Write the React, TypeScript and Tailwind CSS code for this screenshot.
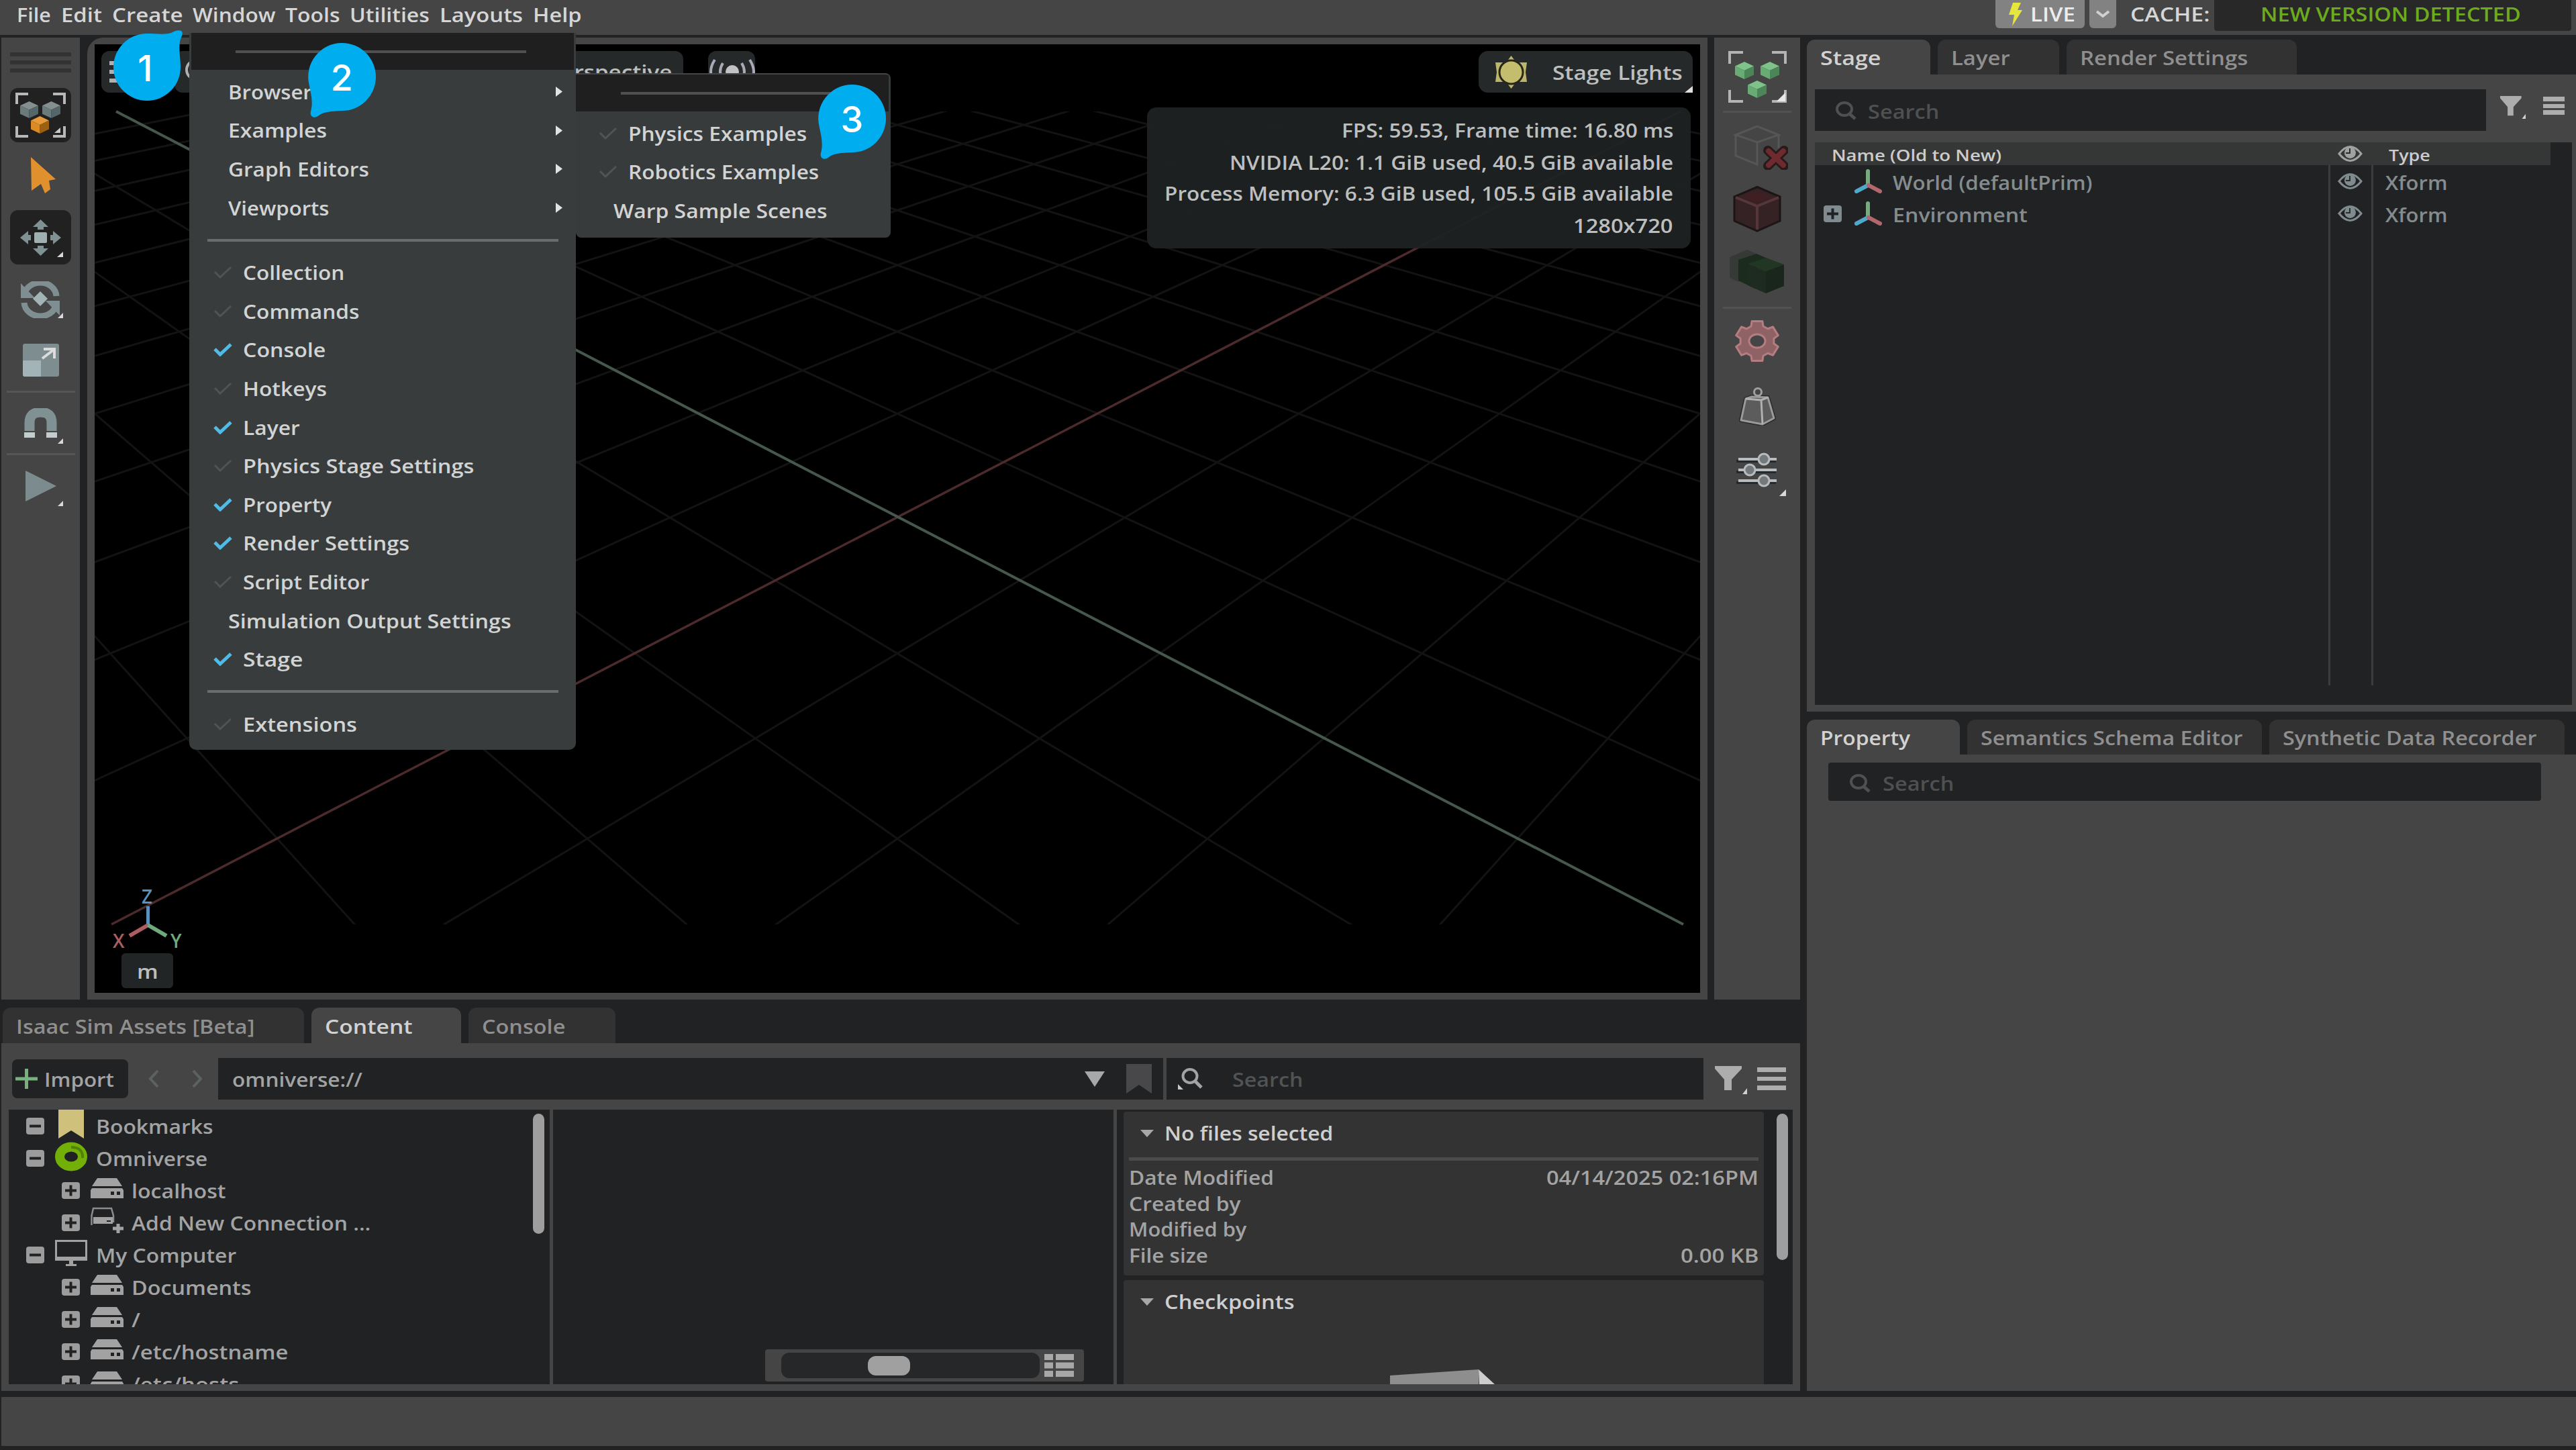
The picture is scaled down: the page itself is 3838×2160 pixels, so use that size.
import { useLayoutEffect, useRef, useState } from "react";
import type { ReactNode } from "react";
import clsx from "clsx";

// Text set to a fixed width, the UI font is drawn a bit wider than Open Sans
function Label({ w, className, children }: { w: number; className?: string; children: ReactNode }) {
  const ref = useRef<HTMLSpanElement>(null);
  const [stretch, setStretch] = useState(1);

  useLayoutEffect(() => {
    if (ref.current) setStretch(w / ref.current.offsetWidth);
  }, [w]);

  return (
    <span className={clsx("inline-block shrink-0 whitespace-nowrap", className)} style={{ width: w }}>
      <span ref={ref} className="inline-block origin-left" style={{ transform: `scaleX(${stretch})` }}>
        {children}
      </span>
    </span>
  );
}

const menus = [
  { name: "File", w: 51 },
  { name: "Edit", w: 61 },
  { name: "Create", w: 105 },
  { name: "Window", w: 123 },
  { name: "Tools", w: 81 },
  { name: "Utilities", w: 119 },
  { name: "Layouts", w: 124 },
  { name: "Help", w: 72 },
];

function MenuBar() {
  return (
    <div className="h-[52px] shrink-0 flex bg-[#454545] pl-[25px] pr-[7px] text-[#d6d6d6]">
      <div className="h-11 flex items-center gap-[15px]">
        {menus.map((m) => (
          <Label key={m.name} w={m.w}>{m.name}</Label>
        ))}
      </div>
      <div className="ml-auto flex items-start">
        <div className="w-[133px] h-[42px] flex items-center bg-[#828282] rounded-b-md pl-5 text-[#ececec]">
          <svg width="20" height="36" viewBox="0 0 20 36">
            <path d="M6 1h12l-5 11h7L5 36l3-17H0z" fill="#e6e63c" />
          </svg>
          <Label w={67} className="ml-3">LIVE</Label>
        </div>
        <div className="w-10 h-[42px] ml-[7px] flex items-center justify-center bg-[#828282] rounded-b-md">
          <svg width="22" height="12" viewBox="0 0 22 12">
            <path d="M2 2l9 7 9-7" fill="none" stroke="#d0d0d0" strokeWidth="4" />
          </svg>
        </div>
        <div className="h-[42px] ml-[21px] flex items-center">
          <Label w={118}>CACHE:</Label>
        </div>
        <div className="w-[532px] h-[46px] ml-[7px] pb-1 flex items-center justify-center bg-[#282828] rounded-b text-[#6cab1c]">
          <Label w={388} className="mr-1.5">NEW VERSION DETECTED</Label>
        </div>
      </div>
    </div>
  );
}

type Tab = { name: string; w: number; text: number; active?: boolean };

function Tabs({ tabs, className }: { tabs: Tab[]; className?: string }) {
  return (
    <div className={clsx("flex gap-[11px]", className)}>
      {tabs.map((t) => (
        <div
          key={t.name}
          className={clsx(
            "h-full flex items-center pl-5 pt-0.5 rounded-t-[12px]",
            t.active ? "bg-[#454545] text-[#d2d2d2]" : "bg-[#323232] text-[#8f8f8f]"
          )}
          style={{ width: t.w }}
        >
          <Label w={t.text}>{t.name}</Label>
        </div>
      ))}
    </div>
  );
}

function Cube({ x, y, w, h, top, left, right }: {
  x: number; y: number; w: number; h: number; top: string; left: string; right: string;
}) {
  const cx = x + w / 2;
  const q = h / 4;
  return (
    <g>
      <path d={`M${cx} ${y}L${x + w} ${y + q}L${cx} ${y + 2 * q}L${x} ${y + q}Z`} fill={top} />
      <path d={`M${x} ${y + q}L${cx} ${y + 2 * q}V${y + h}L${x} ${y + 3 * q}Z`} fill={left} />
      <path d={`M${x + w} ${y + q}L${cx} ${y + 2 * q}V${y + h}L${x + w} ${y + 3 * q}Z`} fill={right} />
    </g>
  );
}

function LeftToolbar() {
  return (
    <div className="w-[117px] shrink-0 flex flex-col items-center bg-[#454545]">
      <div className="mt-[22px] w-[91px] flex flex-col gap-[6px]">
        <div className="h-[6px] bg-[#333]" />
        <div className="h-[6px] bg-[#333]" />
        <div className="h-[6px] bg-[#333]" />
      </div>
      <div className="mt-[23px] w-[91px] h-[81px] rounded-[12px] bg-[#212121] flex items-center justify-center">
        <svg width="75" height="67" viewBox="0 0 75 67">
          <path d="M2 17V2h17M56 2h17v15M2 50v15h17M56 65h17V50" fill="none" stroke="#b8b8bb" strokeWidth="4" />
          <Cube x={7} y={13} w={27} h={25} top="#84908f" left="#6b7b7c" right="#55666a" />
          <Cube x={40} y={13} w={27} h={25} top="#84908f" left="#6b7b7c" right="#55666a" />
          <Cube x={23} y={35} w={27} h={26} top="#e89a38" left="#dc8a24" right="#9c6012" />
          <path d="M67 52v8h-9z" fill="#c8c8c8" />
        </svg>
      </div>
      <svg className="mt-[22px] ml-[7px]" width="38" height="54" viewBox="0 0 38 54">
        <path d="M1 0L38 33 28 35 30 48 22 54 16 40 2 50Z" fill="#e0902c" />
      </svg>
      <div className="mt-[25px] w-[91px] h-[81px] rounded-[12px] bg-[#212121] flex items-center justify-center">
        <svg width="91" height="81" viewBox="0 0 91 81">
          <rect x="36" y="33" width="19" height="16" rx="2" fill="#9fb0b2" />
          <path
            d="M45.500 14L57 25H50V29H41V25H34ZM45.500 68L57 57H50V53H41V57H34ZM15 41L27 31V37H31V45H27V51ZM76 41L64 31V37H60V45H64V51Z"
            fill="#7f9193"
          />
          <path d="M79 62v8h-9z" fill="#d8d8d8" />
        </svg>
      </div>
      <svg className="mt-[25px]" width="69" height="55" viewBox="0 0 69 55">
        <path d="M10 24A24 21 0 0 1 58 22M58 30A24 21 0 0 1 10 32" fill="none" stroke="#7f8f91" strokeWidth="9" />
        <path d="M5 3V25H26ZM63 51V29H42Z" fill="#7f8f91" />
        <path d="M34 15L45 26 34 37 23 26Z" fill="#a3b4b6" />
        <path d="M68 47v8h-8z" fill="#d8d8d8" />
      </svg>
      <svg className="mt-[38px]" width="54" height="49" viewBox="0 0 54 49">
        <rect width="54" height="49" rx="3" fill="#7d8d90" />
        <path d="M0 25H27V49H3Q0 49 0 46Z" fill="#a3b4b8" />
        <path d="M29 22L46 9M31 8H47V22" fill="none" stroke="#dcdcdc" strokeWidth="4" />
      </svg>
      <div className="mt-[21px] w-[102px] h-[3px] bg-[#565656]" />
      <svg className="mt-[23px]" width="69" height="53" viewBox="0 0 69 53">
        <path d="M18 34V22Q18 6 34.500 6T51 22V34" fill="none" stroke="#7f9193" strokeWidth="15" />
        <path d="M10 36H26V44H10ZM43 36H59V44H43Z" fill="#c3cdce" />
        <path d="M68 45v8h-8z" fill="#d8d8d8" />
      </svg>
      <div className="mt-[14px] w-[102px] h-[3px] bg-[#565656]" />
      <svg className="mt-[23px]" width="69" height="53" viewBox="0 0 69 53">
        <path d="M12 0L58 23 12 46Z" fill="#7c8c8e" />
        <path d="M68 45v8h-8z" fill="#d8d8d8" />
      </svg>
    </div>
  );
}

// Six-tooth gear outline around (cx, cy)
function gearPoints(cx: number, cy: number) {
  const pts: string[] = [];
  for (let i = 0; i < 6; i++) {
    const mid = i * 60 - 90;
    [[-21, 24], [-14, 31], [14, 31], [21, 24]].forEach(([da, r]) => {
      const a = ((mid + da) * Math.PI) / 180;
      pts.push(`${cx + r * 1.05 * Math.cos(a)},${cy + r * 0.98 * Math.sin(a)}`);
    });
  }
  return pts.join(" ");
}

function RightToolbar() {
  const green = { top: "#7fc28a", left: "#68ab74", right: "#4c8558" };
  return (
    <div className="w-[128px] shrink-0 flex flex-col items-center bg-[#454545]">
      <svg className="mt-5" width="87" height="77" viewBox="0 0 87 77">
        <path d="M2 19V2h20M65 2h20v17M2 58v17h20M65 75h20V58" fill="none" stroke="#b4b4b4" strokeWidth="4" />
        <Cube x={10} y={16} w={28} h={26} {...green} />
        <Cube x={48} y={16} w={28} h={26} {...green} />
        <Cube x={29} y={44} w={28} h={26} {...green} />
        <path d="M85 62v13H72z" fill="#e8e8e8" />
      </svg>
      <div className="mt-3 w-[102px] h-[3px] bg-[#525252]" />
      <svg className="mt-[19px]" width="92" height="66" viewBox="0 0 92 66">
        <path d="M14 14L46 1 78 14 46 25ZM14 14V45L46 58V25M78 14V34" fill="none" stroke="#565656" strokeWidth="3" />
        <path d="M62 37L86 60M86 37L62 60" stroke="#271a1a" strokeWidth="14" strokeLinecap="round" />
        <path d="M63 38L85 59M85 38L63 59" stroke="#6e2a2e" strokeWidth="8" strokeLinecap="round" />
      </svg>
      <svg className="mt-6" width="72" height="69" viewBox="0 0 72 69">
        <path d="M36 1.500L70 16V52L36 67 2 52V16Z" fill="#352224" stroke="#1c1516" strokeWidth="3" />
        <path d="M4 17L36 30 68 17M36 30V65" fill="none" stroke="#563638" strokeWidth="4" />
        <path d="M14 16L36 8 58 16 36 25Z" fill="#401f23" />
      </svg>
      <svg className="mt-[26px]" width="82" height="66" viewBox="0 0 82 66">
        <path d="M0 11L26 0 40 6 14 16V48L0 42Z" fill="#363a37" />
        <path d="M13 15L40 6 66 17 38 27V58L13 46Z" fill="#1b2c1e" />
        <path d="M27 21L54 12 81 22 54 32Z" fill="#223624" />
        <path d="M27 21L54 32V65L27 53Z" fill="#1d2b20" />
        <path d="M81 22L54 32V65L81 54Z" fill="#1a261c" />
      </svg>
      <div className="mt-[19px] w-[102px] h-[3px] bg-[#525252]" />
      <svg className="mt-4" width="70" height="64" viewBox="0 0 70 64">
        <polygon points={gearPoints(35, 32)} fill="#8f6365" stroke="#b57d80" strokeWidth="3" strokeLinejoin="round" />
        <ellipse cx="35" cy="32" rx="12" ry="10" fill="#454545" stroke="#b57d80" strokeWidth="3" />
      </svg>
      <svg className="mt-9" width="56" height="58" viewBox="0 0 56 58">
        <path d="M11 18L4 50 36 56 53 47 44 16 20 15Z" fill="#5c5c5c" stroke="#292929" strokeWidth="6" strokeLinejoin="round" />
        <path d="M11 18L4 50 36 56 53 47 44 16 20 15Z" fill="#5c5c5c" stroke="#9a9a9a" strokeWidth="3" strokeLinejoin="round" />
        <path d="M11 18L34 20 44 16M34 20L36 56" fill="none" stroke="#b0b0b0" strokeWidth="3" />
        <circle cx="29" cy="8" r="5.500" fill="none" stroke="#a0a0a0" strokeWidth="3" />
      </svg>
      <svg className="mt-[38px]" width="87" height="67" viewBox="0 0 87 67">
        <path d="M12 15H71M12 31H71M12 47H71" stroke="#24292d" strokeWidth="4" />
        <path d="M15 12H72M15 28H72M15 44H72" stroke="#b9bcbe" strokeWidth="4" />
        <g fill="#74797d" stroke="#b9bcbe" strokeWidth="3">
          <circle cx="53" cy="12" r="8" />
          <circle cx="32" cy="28" r="8" />
          <circle cx="53" cy="44" r="8" />
        </g>
        <path d="M86 57v10H76z" fill="#d8d8d8" />
      </svg>
    </div>
  );
}

// Ground grid. (a, b) are floor coordinates along the screen axes, b going away from the camera
function project(a: number, b: number) {
  const s = 1 + 0.06663 * b;
  return { x: 1337 + (169.4 * a) / s, y: 771 - (87.72 * b) / s };
}

function Grid() {
  const near = -5.5;
  const far = 14;
  const lines: ReactNode[] = [];
  for (let m = -20; m <= 20; m++) {
    if (m === 0) continue;
    const p1 = project(2 * m + near, near);
    const p2 = project(2 * m + far, far);
    const q1 = project(2 * m - near, near);
    const q2 = project(2 * m - far, far);
    lines.push(<line key={`p${m}`} x1={p1.x} y1={p1.y} x2={p2.x} y2={p2.y} />);
    lines.push(<line key={`q${m}`} x1={q1.x} y1={q1.y} x2={q2.x} y2={q2.y} />);
  }
  return (
    <svg className="block" width="2392" height="1413" viewBox="141 66 2392 1413">
      <clipPath id="floor">
        <rect x="141" y="166" width="2392" height="1211" />
      </clipPath>
      <g clipPath="url(#floor)" stroke="#131313" strokeWidth="3">{lines}</g>
      <line x1="166" y1="1377" x2="2504" y2="166" stroke="#4d2a2c" strokeWidth="3.500" />
      <line x1="173" y1="166" x2="2508" y2="1377" stroke="#46584c" strokeWidth="4" />
      <g strokeWidth="6">
        <path d="M220.500 1378V1350" stroke="#5a8fbe" strokeWidth="5" />
        <path d="M220.500 1378L193 1394" stroke="#ad5c61" />
        <path d="M220.500 1378L248 1394" stroke="#6eaa7c" />
      </g>
    </svg>
  );
}

function Viewport() {
  return (
    <div className="relative w-[2414px] h-[1433px] shrink-0 bg-[#454545] px-[11px] py-[10px] rounded-tl-[24px]">
      <div className="relative w-full h-full bg-black overflow-hidden text-[#bdbfbf]">
        <Grid />
        {/* Gizmo letters */}
        <span className="absolute left-[70px] top-[1249px] text-[28px] leading-[40px] text-[#5a8fbe]">Z</span>
        <span className="absolute left-[27px] top-[1315px] text-[28px] leading-[40px] text-[#ad5c61]">X</span>
        <span className="absolute left-[113px] top-[1315px] text-[28px] leading-[40px] text-[#6eaa7c]">Y</span>
        <div className="absolute left-[40px] top-[1354px] w-[77px] h-[52px] rounded-md bg-[#212526] flex items-center justify-center pt-0.5">
          <Label w={32}>m</Label>
        </div>

        <div className="absolute left-[10px] top-[10px] w-[68px] h-[62px] rounded-[12px] bg-[#26292a] flex flex-col justify-center gap-[7px] pl-3">
          <div className="w-10 h-[6px] bg-[#b0b0b0]" />
          <div className="w-10 h-[6px] bg-[#b0b0b0]" />
          <div className="w-10 h-[6px] bg-[#b0b0b0]" />
        </div>
        <div className="absolute left-[119px] top-[10px] w-[300px] h-[62px] rounded-[12px] bg-[#26292a] flex items-start pt-3 pl-4">
          <div className="w-9 h-8 rounded-full border-4 border-[#b0b0b0]" />
        </div>
        <div className="absolute left-[560px] top-[10px] w-[317px] h-[62px] rounded-[12px] bg-[#26292a] flex items-center justify-end pr-4">
          <Label w={186}>Perspective</Label>
        </div>
        <div className="absolute left-[914px] top-[10px] w-[70px] h-[62px] rounded-[12px] bg-[#26292a]">
          <svg width="70" height="62" viewBox="0 0 70 62">
            <circle cx="36" cy="31" r="10" fill="#c2c2c6" />
            <path d="M22 18Q14 31 22 44M50 18Q58 31 50 44M10 13Q-2 31 10 49M62 13Q74 31 62 49" fill="none" stroke="#a9a9b8" strokeWidth="4" />
          </svg>
        </div>

        <div className="absolute left-[2062px] top-[10px] w-[319px] h-[62px] rounded-[14px] bg-[#26292a] flex items-center pl-[25px]">
          <svg width="47" height="49" viewBox="0 0 47 49">
            <path d="M23.500 0L31 10 47 10 45 24.500 47 39 31 39 23.500 49 16 39 0 39 2 24.500 0 10 16 10Z" fill="#bdb56a" />
            <circle cx="23.500" cy="24.500" r="17.500" fill="#c5bd6e" stroke="#26261a" strokeWidth="3" />
          </svg>
          <Label w={194} className="ml-[38px] mt-0.5">Stage Lights</Label>
          <svg className="absolute right-0 bottom-0" width="12" height="10" viewBox="0 0 12 10">
            <path d="M12 0V10H0Z" fill="#e0e0e0" />
          </svg>
        </div>

        <div className="absolute left-[1568px] top-[94px] w-[810px] h-[210px] rounded-[14px] bg-[#1e2223]/95 pt-[9px] pr-[26px] flex flex-col items-end">
          <div className="h-[49px] flex items-center"><Label w={494}>FPS: 59.53, Frame time: 16.80 ms</Label></div>
          <div className="h-[47px] flex items-center"><Label w={661}>NVIDIA L20: 1.1 GiB used, 40.5 GiB available</Label></div>
          <div className="h-[46px] flex items-center"><Label w={758}>Process Memory: 6.3 GiB used, 105.5 GiB available</Label></div>
          <div className="h-[49px] flex items-center"><Label w={149}>1280x720</Label></div>
        </div>
      </div>
    </div>
  );
}

function SearchIcon({ className }: { className?: string }) {
  return (
    <svg className={className} width="31" height="28" viewBox="0 0 31 28">
      <ellipse cx="13" cy="11.500" rx="11" ry="9.500" fill="none" stroke="currentColor" strokeWidth="4" />
      <path d="M20 18L29 26" stroke="currentColor" strokeWidth="5" />
    </svg>
  );
}

function FilterIcon({ w, h }: { w: number; h: number }) {
  return (
    <svg width={w} height={h} viewBox="0 0 48 42" preserveAspectRatio="none">
      <path d="M0 0H40V4L25 20V36H14V20L0 4Z" fill="#adadad" />
      <path d="M48 33V42H41Z" fill="#d0d0d0" />
    </svg>
  );
}

function Burger({ className }: { className?: string }) {
  return (
    <div className={clsx("flex flex-col justify-between", className)}>
      <div className="h-[7px] bg-[#adadad]" />
      <div className="h-[6px] bg-[#adadad]" />
      <div className="h-[7px] bg-[#adadad]" />
    </div>
  );
}

function ExpandBox({ open, className, color = "#9c9c9c" }: { open?: boolean; className?: string; color?: string }) {
  return (
    <svg className={clsx("shrink-0", className)} width="27" height="25" viewBox="0 0 27 25">
      <rect width="27" height="25" rx="4" fill={color} />
      <path d={open ? "M5 12.500H22" : "M5 12.500H22M13.500 4.500V20.500"} stroke="#202224" strokeWidth="4" />
    </svg>
  );
}

type TreeIcon = "bookmark" | "omniverse" | "disk" | "add" | "computer";

function NodeIcon({ kind }: { kind: TreeIcon }) {
  return (
    <svg className="shrink-0" width="77" height="48" viewBox="0 0 77 48">
      {kind === "bookmark" && <path d="M21 0H59V43L40 31 21 43Z" fill="#cfc07c" />}
      {kind === "omniverse" && (
        <>
          <ellipse cx="40" cy="22" rx="17" ry="14.500" fill="none" stroke="#72b008" strokeWidth="14" />
          <path d="M40 8Q58 8 57 24" fill="none" stroke="#4f8205" strokeWidth="4" />
        </>
      )}
      {kind === "disk" && (
        <>
          <path d="M26 6H55L63 18H18Z" fill="#a2a2a2" />
          <path d="M18 21H63L65 24V36H16V24Z" fill="#a2a2a2" />
          <path d="M46 26H51V31H46ZM55 26H60V31H55Z" fill="#202224" />
        </>
      )}
      {kind === "add" && (
        <>
          <path d="M17.500 28V14L20 3H47L50 14V24" fill="none" stroke="#8c8c8c" strokeWidth="2.500" />
          <path d="M20 16H49V26H20Z" fill="#a2a2a2" />
          <path d="M40 22H46" stroke="#202224" strokeWidth="2" />
          <path d="M49 33H65M57 26V40" stroke="#a2a2a2" strokeWidth="5" />
        </>
      )}
      {kind === "computer" && (
        <>
          <rect x="17.500" y="3.500" width="45" height="28" fill="none" stroke="#a2a2a2" strokeWidth="3" />
          <path d="M17 27H63V33H17ZM37 33H43V38H48V41H32V38H37Z" fill="#a2a2a2" />
        </>
      )}
    </svg>
  );
}

const nodes: { name: string; w: number; icon: TreeIcon; child?: boolean }[] = [
  { name: "Bookmarks", w: 174, icon: "bookmark" },
  { name: "Omniverse", w: 166, icon: "omniverse" },
  { name: "localhost", w: 140, icon: "disk", child: true },
  { name: "Add New Connection ...", w: 356, icon: "add", child: true },
  { name: "My Computer", w: 209, icon: "computer" },
  { name: "Documents", w: 179, icon: "disk", child: true },
  { name: "/", w: 13, icon: "disk", child: true },
  { name: "/etc/hostname", w: 233, icon: "disk", child: true },
  { name: "/etc/hosts", w: 160, icon: "disk", child: true },
];

function DetailRow({ name, w, value, vw }: { name: string; w: number; value?: string; vw?: number }) {
  return (
    <div className="h-[38.500px] flex items-center justify-between">
      <Label w={w}>{name}</Label>
      {value && vw && <Label w={vw}>{value}</Label>}
    </div>
  );
}

function CardTitle({ name, w }: { name: string; w: number }) {
  return (
    <div className="flex items-center h-[62px] pl-[17px] pt-0.5 text-[#cfcfcf]">
      <svg width="20" height="11" viewBox="0 0 20 11">
        <path d="M0 0H20L10 11Z" fill="#a8a8a8" />
      </svg>
      <Label w={w} className="ml-[16px]">{name}</Label>
    </div>
  );
}

function ContentBrowser() {
  return (
    <div className="h-[518px] bg-[#454545] pt-[22px] text-[#a3a3a3]">
      <div className="h-[62px] flex items-center pl-4">
        <div className="w-[173px] h-[58px] rounded-lg bg-[#202224] flex items-center pl-[5px]">
          <svg width="33" height="30" viewBox="0 0 33 30">
            <path d="M0 15H33M16.500 0V30" stroke="#78b07e" strokeWidth="5" />
          </svg>
          <Label w={104} className="ml-[10px] mt-0.5">Import</Label>
        </div>
        <svg width="134" height="62" viewBox="0 0 134 62">
          <path d="M44 19L33 31 44 43M97 19L108 31 97 43" fill="none" stroke="#5c6262" strokeWidth="4" />
        </svg>
        <div className="w-[1408px] h-full bg-[#202224] flex items-center pl-[21px] pr-[17px]">
          <Label w={194} className="mt-0.5">omniverse://</Label>
          <svg className="ml-auto" width="30" height="23" viewBox="0 0 30 23">
            <path d="M0 0H30L15 23Z" fill="#a8a8a8" />
          </svg>
          <svg className="ml-8" width="38" height="44" viewBox="0 0 38 44">
            <path d="M0 0H38V44L19 31 0 44Z" fill="#48484a" />
          </svg>
        </div>
        <div className="w-[800px] h-full ml-[5px] bg-[#202224] flex items-center pl-4">
          <svg width="38" height="34" viewBox="0 0 38 34">
            <ellipse cx="19" cy="13" rx="10.500" ry="10" fill="none" stroke="#a3a3a3" strokeWidth="4" />
            <path d="M26 20L36 30" stroke="#a3a3a3" strokeWidth="5" />
            <path d="M1 25V33H9Z" fill="#c8c8c8" />
          </svg>
          <Label w={106} className="ml-[44px] mt-0.5 text-[#515354]">Search</Label>
        </div>
        <div className="ml-[17px] mt-1"><FilterIcon w={48} h={42} /></div>
        <Burger className="ml-[15px] w-[43px] h-[34px]" />
      </div>

      <div className="mt-[15px] ml-[11px] h-[409px] flex gap-[5px]">
        <div className="w-[806px] bg-[#202224] flex overflow-hidden">
          <div className="flex-1">
            {nodes.map((n) => (
              <div key={n.name} className={clsx("h-12 flex items-center", n.child ? "pl-[79px]" : "pl-[26px]")}>
                <ExpandBox open={!n.child} />
                <NodeIcon kind={n.icon} />
                <Label w={n.w} className="mt-0.5">{n.name}</Label>
              </div>
            ))}
          </div>
          <div className="w-[17px] h-[179px] mt-[6px] mr-2 rounded-full bg-[#9e9e9e]" />
        </div>

        <div className="w-[835px] bg-[#202224] flex items-end justify-end pr-11 pb-1">
          <div className="w-[475px] h-12 rounded bg-[#454545] flex items-center pl-6">
            <div className="w-[385px] h-[38px] rounded-[12px] bg-[#262728] flex items-center pl-[129px]">
              <div className="w-[63px] h-[29px] rounded-[12px] bg-[#a0a0a0]" />
            </div>
            <svg className="ml-[7px]" width="44" height="34" viewBox="0 0 44 34">
              <path d="M0 0H13V9H0ZM17 0H44V9H17ZM0 12.500H13V21.500H0ZM17 12.500H44V21.500H17ZM0 25H13V34H0ZM17 25H44V34H17Z" fill="#a8a8a8" />
            </svg>
          </div>
        </div>

        <div className="w-[1007px] bg-[#202224] flex overflow-hidden pl-[10px] pt-[3px]">
          <div className="w-[954px] flex flex-col gap-[7px]">
            <div className="h-[244px] shrink-0 rounded bg-[#333] px-2">
              <div className="h-[68px]"><CardTitle name="No files selected" w={251} /></div>
              <div className="h-[5px] bg-[#4b4b4b] mb-[6px]" />
              <DetailRow name="Date Modified" w={216} value="04/14/2025 02:16PM" vw={316} />
              <DetailRow name="Created by" w={167} />
              <DetailRow name="Modified by" w={175} />
              <DetailRow name="File size" w={118} value="0.00 KB" vw={116} />
            </div>
            <div className="h-[155px] shrink-0 rounded-t bg-[#333] px-2">
              <CardTitle name="Checkpoints" w={193} />
              <svg className="mt-[71px] ml-[389px]" width="158" height="24" viewBox="0 0 158 24">
                <path d="M0 9L132 0V24H0Z" fill="#8e8e8e" />
                <path d="M132 0L158 24H133Z" fill="#cdcdcd" />
              </svg>
            </div>
          </div>
          <div className="w-[17px] h-[218px] ml-[19px] mt-[3px] rounded-full bg-[#9e9e9e]" />
        </div>
      </div>
    </div>
  );
}

function Eye({ color }: { color: string }) {
  return (
    <svg width="37" height="24" viewBox="0 0 37 24">
      <path d="M2 12Q18.500 -9 35 12Q18.500 33 2 12Z" fill="none" stroke={color} strokeWidth="3" />
      <circle cx="18.500" cy="10.500" r="8.500" fill={color} />
      <path d="M18 4V11H12" fill="none" stroke="#2a2c2d" strokeWidth="2" />
    </svg>
  );
}

function PrimRow({ name, w, expandable }: { name: string; w: number; expandable?: boolean }) {
  return (
    <div className="h-12 flex items-center text-[#848c8d]">
      <div className="w-[58px] pl-[13px]">{expandable && <ExpandBox color="#7f8b8e" />}</div>
      <svg width="43" height="36" viewBox="0 0 43 36">
        <g strokeWidth="6" strokeLinecap="round">
          <path d="M21 3V22" stroke="#78ab80" />
          <path d="M21 24L4 33" stroke="#4fa9cb" />
          <path d="M22 24L39 33" stroke="#b3666b" />
        </g>
      </svg>
      <Label w={w} className="ml-[15px] mt-1">{name}</Label>
      <div className="ml-auto w-[317px] flex items-center">
        <Eye color="#7f8b8e" />
        <Label w={92} className="ml-[34px] mt-1">Xform</Label>
      </div>
    </div>
  );
}

function StagePanel() {
  return (
    <div className="h-[949px] bg-[#454545] pt-[22px] pl-3">
      <div className="h-[62px] flex">
        <div className="w-[1000px] h-full bg-[#202224] flex items-center pl-[31px] pt-0.5 text-[#4e5051]">
          <SearchIcon />
          <Label w={107} className="ml-[17px] mt-0.5">Search</Label>
        </div>
        <div className="mt-[10px] ml-[21px]"><FilterIcon w={38} h={34} /></div>
        <Burger className="mt-[11px] ml-[26px] w-[32px] h-[27px]" />
      </div>
      <div className="relative mt-[17px] w-[1128px] h-[838px] bg-[#202224]">
        <div className="w-[1096px] h-[34px] bg-[#343736] flex items-center pl-[25px] text-[23px] text-[#cccccc]">
          <Label w={253} className="mt-1">Name (Old to New)</Label>
          <div className="ml-auto w-[317px] flex items-center">
            <Eye color="#a0a2a2" />
            <Label w={62} className="ml-[39px] mt-1">Type</Label>
          </div>
        </div>
        <div className="w-[1096px]">
          <PrimRow name="World (defaultPrim)" w={297} />
          <PrimRow name="Environment" w={201} expandable />
        </div>
        {/* column dividers */}
        <div className="absolute left-[765px] top-[34px] w-[3px] h-[775px] bg-[#3a3c3d]" />
        <div className="absolute left-[829px] top-[34px] w-[3px] h-[775px] bg-[#3a3c3d]" />
      </div>
    </div>
  );
}

function Check({ on }: { on?: boolean }) {
  return (
    <svg className="shrink-0" width="28" height="20" viewBox="0 0 28 20">
      <path d="M2 9L10 17 26 2" fill="none" stroke={on ? "#4fbbe6" : "#4f5455"} strokeWidth={on ? 5 : 3} />
    </svg>
  );
}

function MenuItem({ name, w, checked, arrow }: { name: string; w: number; checked?: boolean; arrow?: boolean }) {
  const checkable = checked !== undefined;
  return (
    <div className={clsx("h-[57.600px] flex items-center pr-5", checkable ? "pl-9" : "pl-[58px]")}>
      {checkable && <Check on={checked} />}
      <Label w={w} className={checkable ? "ml-[16px]" : ""}>{name}</Label>
      {arrow && (
        <svg className="ml-auto" width="10" height="15" viewBox="0 0 10 15">
          <path d="M0 0L10 7.500 0 15Z" fill="#e2e2e2" />
        </svg>
      )}
    </div>
  );
}

function Separator() {
  return (
    <div className="h-[39px] flex items-center pl-[27px] pr-[26px]">
      <div className="w-full h-1 bg-[#6a6c6d]" />
    </div>
  );
}

function WindowMenu() {
  return (
    <div className="absolute left-[282px] top-[49px] w-[576px] h-[1068px] rounded-b-[10px] bg-[#383c3d] text-[#d2d4d4]">
      <div className="h-[55px] mx-[3px] bg-[#1f1f1f] flex items-center pl-[66px] pr-[71px]">
        <div className="w-full h-1 bg-[#505050]" />
      </div>
      <div className="pt-1">
        <MenuItem name="Browsers" w={140} arrow />
        <MenuItem name="Examples" w={147} arrow />
        <MenuItem name="Graph Editors" w={210} arrow />
        <MenuItem name="Viewports" w={151} arrow />
        <Separator />
        <MenuItem name="Collection" w={151} checked={false} />
        <MenuItem name="Commands" w={173} checked={false} />
        <MenuItem name="Console" w={123} checked />
        <MenuItem name="Hotkeys" w={125} checked={false} />
        <MenuItem name="Layer" w={85} checked />
        <MenuItem name="Physics Stage Settings" w={344} checked={false} />
        <MenuItem name="Property" w={132} checked />
        <MenuItem name="Render Settings" w={248} checked />
        <MenuItem name="Script Editor" w={188} checked={false} />
        <MenuItem name="Simulation Output Settings" w={422} />
        <MenuItem name="Stage" w={89} checked />
        <Separator />
        <MenuItem name="Extensions" w={170} checked={false} />
      </div>
    </div>
  );
}

function ExamplesMenu() {
  return (
    <div className="absolute left-[858px] top-[109px] w-[469px] h-[245px] rounded-r-[8px] rounded-bl-[8px] overflow-hidden bg-[#383b3c] border-t-2 border-[#454545] text-[#d2d4d4]">
      <div className="h-[55px] mr-[3px] bg-[#1f1f1f] flex items-center pl-[67px] pr-[62px]">
        <div className="w-full h-1 bg-[#505050]" />
      </div>
      <div className="pt-1 -ml-0.5">
        <MenuItem name="Physics Examples" w={266} checked={false} />
        <MenuItem name="Robotics Examples" w={284} checked={false} />
        <MenuItem name="Warp Sample Scenes" w={318} />
      </div>
    </div>
  );
}

// Numbered callout, the tail points up-right or down-left
function Callout({ n, up, className }: { n: number; up?: boolean; className: string }) {
  return (
    <div className={clsx("absolute w-[104px] h-[111px] text-white", className)}>
      <svg className="absolute inset-0" width="104" height="111" viewBox="0 0 104 111">
        <path
          d={
            up
              ? "M50 5C64 5 77 7 86 4C92 1 96 -1 101 1C105 5 101 9 99 17C97 29 100 42 100 55A50 50 0 0 1 50 105A50 50 0 0 1 50 5Z"
              : "M50.500 0A50.500 50.500 0 0 1 50.500 101C34 102 24 102 16 108C9 114 2 109 4 102C8 88 4 74 1.500 62A50.500 50.500 0 0 1 50.500 0Z"
          }
          fill="#00adef"
        />
      </svg>
      <span
        className={clsx(
          "absolute left-0 w-[101px] h-[101px] flex items-center justify-center font-[Inter] font-medium text-[54px] leading-none",
          up ? "top-[6px] pr-1.5" : "top-px"
        )}
      >
        {n}
      </span>
    </div>
  );
}

export default function App() {
  return (
    <div className="relative w-[3838px] h-[2160px] overflow-hidden flex flex-col bg-[#202224] font-['Open_Sans','Noto_Sans',sans-serif] font-semibold text-[28px] leading-[38px]">
      <MenuBar />
      <div className="h-[2020px] shrink-0 flex gap-[10px]">
        <div className="w-[2682px] shrink-0 pl-0.5 pt-1 flex flex-col">
          <div className="h-[1433px] shrink-0 flex">
            <LeftToolbar />
            <div className="w-[11px] shrink-0" />
            <Viewport />
            <div className="w-[10px] shrink-0" />
            <RightToolbar />
          </div>
          <Tabs
            className="mt-3 h-[53px] pl-0.5 shrink-0"
            tabs={[
              { name: "Isaac Sim Assets [Beta]", w: 449, text: 355 },
              { name: "Content", w: 223, text: 131, active: true },
              { name: "Console", w: 219, text: 124 },
            ]}
          />
          <ContentBrowser />
        </div>
        <div className="flex-1 flex flex-col pt-[7px]">
          <Tabs
            className="h-[52px] shrink-0"
            tabs={[
              { name: "Stage", w: 184, text: 90, active: true },
              { name: "Layer", w: 181, text: 88 },
              { name: "Render Settings", w: 343, text: 250 },
            ]}
          />
          <StagePanel />
          <Tabs
            className="mt-3 h-[52px] shrink-0"
            tabs={[
              { name: "Property", w: 228, text: 134, active: true },
              { name: "Semantics Schema Editor", w: 439, text: 391 },
              { name: "Synthetic Data Recorder", w: 440, text: 378 },
            ]}
          />
          <div className="flex-1 bg-[#454545] pt-3 pl-8">
            <div className="w-[1062px] h-[57px] rounded bg-[#202224] flex items-center pl-8 pt-1 text-[#4e5051]">
              <SearchIcon />
              <Label w={107} className="ml-[18px]">Search</Label>
            </div>
          </div>
        </div>
      </div>
      <div className="mt-[9px] ml-0.5 h-[73px] shrink-0 bg-[#454545]" />

      <WindowMenu />
      <ExamplesMenu />
      <Callout n={1} up className="left-[169px] top-[45px]" />
      <Callout n={2} className="left-[459px] top-[64px]" />
      <Callout n={3} className="left-[1219px] top-[126px]" />
    </div>
  );
}
